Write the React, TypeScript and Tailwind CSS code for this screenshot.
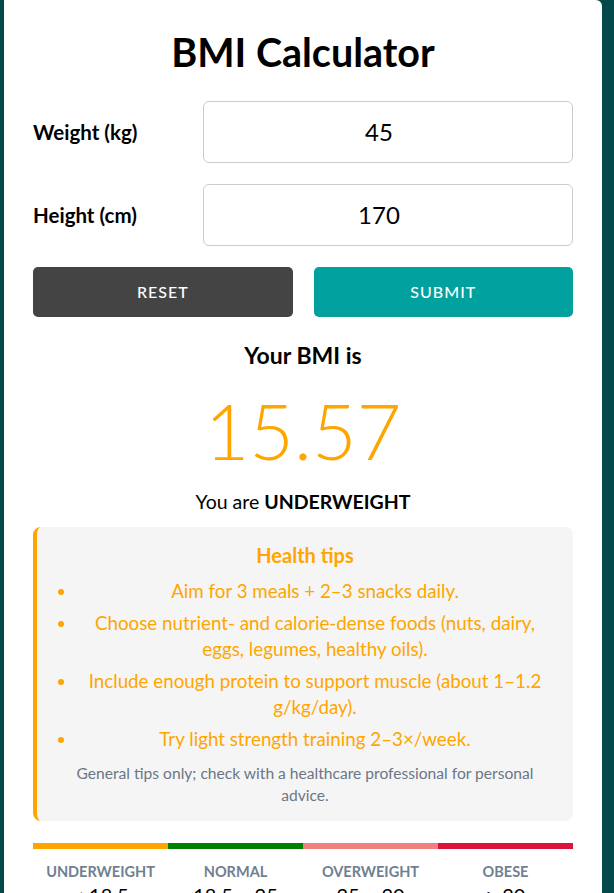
import React from "react";

const tips = [
  "Aim for 3 meals + 2–3 snacks daily.",
  "Choose nutrient- and calorie-dense foods (nuts, dairy, eggs, legumes, healthy oils).",
  "Include enough protein to support muscle (about 1–1.2 g/kg/day).",
  "Try light strength training 2–3×/week.",
];

const cats = [
  { name: "UNDERWEIGHT", range: "< 18.5", color: "bg-[#ffa500]" },
  { name: "NORMAL", range: "18.5 – 25", color: "bg-[#008000]" },
  { name: "OVERWEIGHT", range: "25 – 30", color: "bg-[#f08080]" },
  { name: "OBESE", range: "≥ 30", color: "bg-[#dc143c]" },
];

export default function App() {
  return (
    <div
      className="min-h-screen bg-[#03494a] overflow-hidden"
      style={{ fontFamily: "Lato, 'Noto Sans', sans-serif" }}
    >
      <div className="ml-[4px] w-[598px] bg-white rounded-tr-md min-h-[893px] px-[29px] pt-[26px] pb-10">
        <h1 className="text-center text-[39.5px] font-bold leading-[52px] text-black">BMI Calculator</h1>

        <div className="mt-[23px] flex flex-col gap-[21px]">
          <div className="flex items-center">
            <label className="w-[170px] text-[20.5px] font-bold text-black">Weight (kg)</label>
            <div className="flex-1 h-[62px] rounded-md border border-[#cccccc] flex items-center justify-center pr-[18px] text-[24px] text-black">45</div>
          </div>
          <div className="flex items-center">
            <label className="w-[170px] text-[20.5px] font-bold text-black">Height (cm)</label>
            <div className="flex-1 h-[62px] rounded-md border border-[#cccccc] flex items-center justify-center pr-[18px] text-[24px] text-black">170</div>
          </div>
          <div className="flex gap-[21px]">
            <button className="flex-1 h-[50px] rounded-[5px] bg-[#444444] text-white text-[16px] font-medium tracking-[1px]">RESET</button>
            <button className="flex-1 h-[50px] rounded-[5px] bg-[#00a19f] text-white text-[16px] font-medium tracking-[1px]">SUBMIT</button>
          </div>
        </div>

        <div className="mt-[24px] text-center text-[23px] font-bold leading-[28px] text-black">Your BMI is</div>
        <div className="mt-[23px] text-center text-[77px] font-light leading-[77px] text-[#ffa500]">15.57</div>
        <div className="mt-[19px] text-center text-[19.5px] leading-[28px] text-black">
          You are <span className="font-bold">UNDERWEIGHT</span>
        </div>

        <div className="mt-[11px] rounded-lg border-l-4 border-[#ffa500] bg-[#f5f5f5] px-5 pt-4 pb-[15px]">
          <div className="text-center text-[20px] font-bold leading-[24px] text-[#ffa500]">Health tips</div>
          <ul className="mt-[11px] list-disc pl-[20px] flex flex-col gap-[6px] marker:text-[#ffa500]">
            {tips.map((t) => (
              <li key={t} className="text-center text-[18.75px] leading-[26px] text-[#ffa500]">{t}</li>
            ))}
          </ul>
          <p className="mt-[10px] text-center text-[15.6px] leading-[22px] text-[#6b7785]">
            General tips only; check with a healthcare professional for personal advice.
          </p>
        </div>

        <div className="mt-[22px] flex h-[6px]">
          {cats.map((c) => (
            <div key={c.name} className={`flex-1 ${c.color}`} />
          ))}
        </div>
        <div className="mt-[13px] grid grid-cols-4">
          {cats.map((c) => (
            <div key={c.name} className="text-center">
              <div className="text-[14.5px] font-bold leading-[20px] text-[#708090]">{c.name}</div>
              <div className="text-[20px] leading-[26px] text-black">{c.range}</div>
            </div>
          ))}
        </div>
      </div>
    </div>
  );
}
